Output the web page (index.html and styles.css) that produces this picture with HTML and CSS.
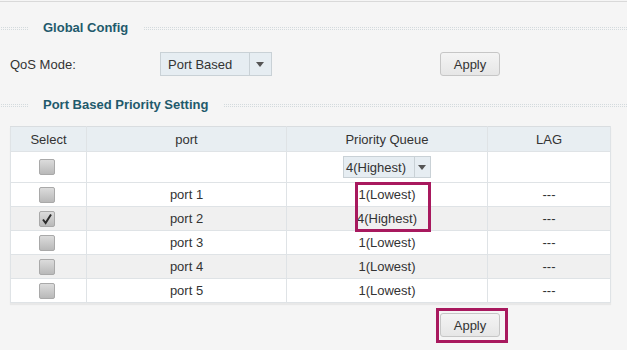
FILE: index.html
```html
<!DOCTYPE html>
<html lang="en">
<head>
    <meta charset="UTF-8">
    <meta name="viewport" content="width=device-width, initial-scale=1.0">
    <title>QoS Config</title>
    <link rel="stylesheet" href="styles.css">
</head>
<body>
    <div class="topbar"></div>

    <div class="section-title">Global Config</div>
    <div class="form-row">
        <span class="label">QoS Mode:</span>
        <div class="select mode-select">
            <span class="select-text">Port Based</span>
            <span class="select-arrow"></span>
        </div>
        <button class="btn top-apply">Apply</button>
    </div>

    <div class="section-title second">Port Based Priority Setting</div>

    <div class="table-wrap">
        <table class="ports">
            <tr class="head">
                <th class="c-select">Select</th>
                <th class="c-port">port</th>
                <th class="c-queue">Priority Queue</th>
                <th class="c-lag">LAG</th>
            </tr>
            <tr class="filter">
                <td><span class="check"></span></td>
                <td></td>
                <td>
                    <div class="select queue-select">
                        <span class="select-text">4(Highest)</span>
                        <span class="select-arrow"></span>
                    </div>
                </td>
                <td></td>
            </tr>
            <tr>
                <td><span class="check"></span></td>
                <td>port 1</td>
                <td>1(Lowest)</td>
                <td>---</td>
            </tr>
            <tr class="alt">
                <td>
                    <span class="check checked">
                        <svg width="14" height="14" viewBox="0 0 14 14"><path d="M3 7.5 L5.6 11 L11 2.5" fill="none" stroke="#2b2b2b" stroke-width="2"/></svg>
                    </span>
                </td>
                <td>port 2</td>
                <td>4(Highest)</td>
                <td>---</td>
            </tr>
            <tr>
                <td><span class="check"></span></td>
                <td>port 3</td>
                <td>1(Lowest)</td>
                <td>---</td>
            </tr>
            <tr class="alt">
                <td><span class="check"></span></td>
                <td>port 4</td>
                <td>1(Lowest)</td>
                <td>---</td>
            </tr>
            <tr>
                <td><span class="check"></span></td>
                <td>port 5</td>
                <td>1(Lowest)</td>
                <td>---</td>
            </tr>
        </table>
        <div class="mark queue-mark"></div>
    </div>

    <div class="bottom-row">
        <button class="btn">Apply</button>
        <div class="mark apply-mark"></div>
    </div>
</body>
</html>
```

FILE: styles.css
```css
html {
    background-color: #f5f5f5;
}

body {
    margin: 0;
    min-height: 350px;
    font-family: "Liberation Sans", Arial, sans-serif;
    font-size: 13px;
    color: #333;
}

.topbar {
    height: 1px;
    border-bottom: 1px solid #d9d9d9;
}

.section-title {
    display: flex;
    align-items: center;
    gap: 15px;
    height: 20px;
    margin-top: 15px;
    font-weight: bold;
    color: #1f5a6c;
}

.section-title::before,
.section-title::after {
    content: "";
    height: 5px;
    margin-top: 2px;
    background-image:
        linear-gradient(90deg, #f5f5f5 1px, transparent 1px),
        linear-gradient(#f5f5f5 1px, #d3dadd 1px);
    background-size: 2px 2px;
}

.section-title::before {
    width: 28px;
}

.section-title::after {
    flex: 1;
}

.section-title.second {
    margin-top: 18px;
}

.form-row {
    display: flex;
    align-items: center;
    height: 24px;
    margin-top: 15px;
}

.label {
    width: 150px;
    padding-left: 10px;
}

.select {
    display: flex;
    align-items: center;
    box-sizing: border-box;
    background-color: #e6edf2;
    border: 1px solid #c9d1d6;
}

.select-text {
    flex: 1;
    padding-left: 7px;
}

.select-arrow {
    position: relative;
    width: 21px;
    height: 100%;
    border-left: 1px solid #c9d1d6;
}

.select-arrow::after {
    content: "";
    position: absolute;
    left: 6px;
    top: 50%;
    margin-top: -2px;
    border-left: 4px solid transparent;
    border-right: 4px solid transparent;
    border-top: 5px solid #555;
}

.mode-select {
    width: 112px;
    height: 24px;
}

.queue-select {
    width: 88px;
    height: 22px;
    margin: 0 auto;
    text-align: left;
}

.queue-select .select-text {
    padding-left: 2px;
}

.queue-select .select-arrow {
    width: 15px;
}

.queue-select .select-arrow::after {
    left: 3px;
}

.btn {
    width: 60px;
    height: 24px;
    padding: 0;
    font-family: inherit;
    font-size: 13px;
    color: #333;
    background: linear-gradient(#f4f4f4, #e6e6e6);
    border: 1px solid #c6c6c6;
    border-radius: 3px;
}

.top-apply {
    margin-left: 168px;
}

.table-wrap {
    position: relative;
    margin: 12px 0 0 10px;
    width: 601px;
}

.ports {
    width: 601px;
    border-collapse: collapse;
    border: 1px solid #d6d9db;
    background-color: #fff;
    box-shadow: 0 2px 1px rgba(0, 0, 0, 0.05);
    text-align: center;
}

.ports th,
.ports td {
    padding: 0;
    height: 23px;
    border: 1px solid #dfe3e6;
    border-top: 1px solid #d9dde0;
}

.ports th {
    height: 24px;
    font-weight: normal;
    background-color: #e8eef2;
}

.c-select { width: 75px; }
.c-port { width: 199px; }
.c-queue { width: 200px; }

.ports .filter td {
    height: 30px;
}

.ports .alt td {
    background-color: #f0f0f0;
}

.check {
    display: inline-block;
    vertical-align: middle;
    box-sizing: border-box;
    width: 16px;
    height: 16px;
    border: 1px solid #a9a9a9;
    border-radius: 2px;
    background: linear-gradient(#dcdcdc, #b9b9b9);
    margin-left: -4px;
}

.check svg {
    display: block;
}

.mark {
    position: absolute;
    box-sizing: border-box;
    border: 3px solid #a8195e;
}

.queue-mark {
    left: 345px;
    top: 56px;
    width: 76px;
    height: 50px;
}

.bottom-row {
    position: relative;
    display: flex;
    margin-top: 10px;
    padding-left: 440px;
}

.apply-mark {
    left: 436px;
    top: -5px;
    width: 72px;
    height: 35px;
}
```
